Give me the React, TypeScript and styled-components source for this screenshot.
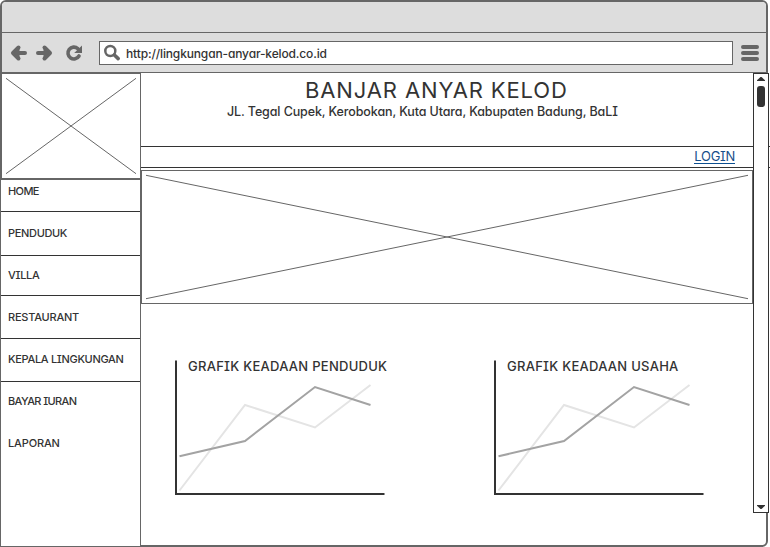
import React from "react";
import styled, { createGlobalStyle } from "styled-components";

const FRAME = "#666666";
const INK = "#333333";

const GlobalStyle = createGlobalStyle`
  * { box-sizing: border-box; }
  body { margin: 0; background: #fff; overflow: hidden; }
  #root { font-family: Inter, "Noto Sans", sans-serif; font-feature-settings: "cv11", "cv08"; color: ${INK}; }
`;

const Page = styled.div`
  position: relative;
  width: 770px;
  height: 547px;
  overflow: hidden;
`;

const Window = styled.div`
  width: 768px;
  height: 547px;
  border: 2px solid ${FRAME};
  border-radius: 6px;
  background: #fff;
  display: flex;
  flex-direction: column;
`;

const TitleBar = styled.div`
  height: 31px;
  flex: none;
  background: #dddddd;
  border-bottom: 1px solid ${FRAME};
  border-radius: 4px 4px 0 0;
`;

const Toolbar = styled.div`
  height: 40px;
  flex: none;
  display: flex;
  align-items: center;
  padding: 0 7px 0 8px;
  background: #dddddd;
  border-bottom: 1px solid ${FRAME};
`;

const ToolIcon = styled.svg<{ $gap: number }>`
  display: block;
  flex: none;
  margin-right: ${(p) => p.$gap}px;
  overflow: visible;
`;

const AddressBar = styled.div`
  flex: 1;
  height: 24px;
  display: flex;
  align-items: center;
  padding-left: 4px;
  border: 1px solid ${FRAME};
  background: #fff;
  margin-right: 8px;
`;

const Url = styled.span`
  font-size: 12px;
  font-weight: 500;
  line-height: 16px;
  letter-spacing: -0.14px;
  padding-top: 2px;
  white-space: nowrap;
`;

const Body = styled.div`
  flex: 1;
  min-height: 0;
  display: grid;
  grid-template-columns: 141px 612px;
  margin-left: -2px;
  margin-bottom: -2px;
`;

const Sidebar = styled.aside`
  display: flex;
  flex-direction: column;
`;

const LogoBox = styled.div`
  height: 106px;
  flex: none;
  margin-left: 1px;
  border: 1px solid ${FRAME};
  background: #fff;
`;

const Menu = styled.nav`
  flex: 1;
  border: 1px solid ${FRAME};
  background: #fff;
`;

const MenuItem = styled.a<{ $height: number; $top: number; $line: boolean; $spacing: number }>`
  display: block;
  height: ${(p) => p.$height}px;
  padding: ${(p) => p.$top}px 0 0 7px;
  border-bottom: ${(p) => (p.$line ? `1px solid ${INK}` : "none")};
  font-size: 11px;
  font-weight: 500;
  line-height: 16px;
  letter-spacing: ${(p) => p.$spacing}px;
  white-space: nowrap;
`;

const Main = styled.main`
  display: flex;
  flex-direction: column;
`;

const Header = styled.header`
  height: 74px;
  width: 629px;
  flex: none;
  border-bottom: 1px solid ${INK};
`;

const Title = styled.h1`
  margin: 0;
  padding: 3px 0 0 164px;
  font-size: 22px;
  font-weight: 400;
  line-height: 28px;
  letter-spacing: 0.88px;
  white-space: nowrap;
`;

const Address = styled.p`
  margin: 0;
  padding: 0 0 0 86px;
  font-size: 12.5px;
  font-weight: 500;
  line-height: 16px;
  letter-spacing: -0.11px;
  white-space: nowrap;
`;

const LoginBar = styled.div`
  height: 21px;
  width: 629px;
  flex: none;
  padding: 2px 35px 0 0;
  border-bottom: 1px solid ${INK};
  text-align: right;
`;

const LoginLink = styled.a`
  display: inline-block;
  height: 15px;
  border-bottom: 1px solid #0b4f91;
  color: #174f8a;
  font-size: 13px;
  line-height: 15px;
  letter-spacing: -0.3px;
  vertical-align: top;
`;

const Banner = styled.div`
  height: 134px;
  flex: none;
  margin-top: 2px;
  border: 1px solid ${FRAME};
`;

const Cross = styled.svg`
  display: block;
`;

const Charts = styled.section`
  display: grid;
  grid-template-columns: 210px 210px;
  column-gap: 109px;
  padding: 56px 0 0 34px;
`;

const ChartCard = styled.figure`
  margin: 0;
  display: grid;
  & > * { grid-area: 1 / 1; }
`;

const ChartTitle = styled.figcaption`
  padding-left: 13px;
  font-size: 13px;
  font-weight: 500;
  line-height: 12px;
  letter-spacing: 0.27px;
  white-space: nowrap;
`;

const Scrollbar = styled.div`
  position: absolute;
  left: 753px;
  top: 73px;
  width: 16px;
  height: 440px;
  display: flex;
  flex-direction: column;
  align-items: center;
  padding: 3px 0;
  border: 1px solid ${INK};
  background: #fff;
`;

const Thumb = styled.div`
  width: 8px;
  height: 21px;
  margin-top: 5px;
  margin-bottom: auto;
  border-radius: 3px;
  background: ${INK};
`;

function CrossLines({ width, height }: { width: number; height: number }) {
  return (
    <Cross width={width} height={height} fill="none" stroke={FRAME} strokeWidth={1}>
      <path d={`M4 4.3L${width - 4} ${height - 4.3}M4 ${height - 4.3}L${width - 4} 4.3`} />
    </Cross>
  );
}

function Chart({ title }: { title: string }) {
  return (
    <ChartCard>
      <svg width="210" height="136" fill="none" strokeWidth="2">
        <polyline points="4.5,130.5 70,45 140,67.5 195.5,25" stroke="#e4e4e4" />
        <polyline points="4.5,96.3 70,81 140,27 195.5,45" stroke="#a3a3a3" />
        <path d="M1 0.5V134H209.5" stroke={INK} />
      </svg>
      <ChartTitle>{title}</ChartTitle>
    </ChartCard>
  );
}

const menu = [
  { label: "HOME", height: 32, top: 3, line: true, spacing: -0.6 },
  { label: "PENDUDUK", height: 44, top: 13, line: true, spacing: -0.33 },
  { label: "VILLA", height: 40, top: 11, line: true, spacing: -0.3 },
  { label: "RESTAURANT", height: 43, top: 13, line: true, spacing: -0.22 },
  { label: "KEPALA LINGKUNGAN", height: 43, top: 12, line: true, spacing: -0.32 },
  { label: "BAYAR IURAN", height: 42, top: 11, line: false, spacing: -0.62 },
  { label: "LAPORAN", height: 42, top: 11, line: false, spacing: -0.15 },
];

export default function App() {
  return (
    <Page>
      <GlobalStyle />
      <Window>
        <TitleBar />
        <Toolbar>
          <ToolIcon $gap={9} width="17" height="16" fill="none" stroke={FRAME} strokeWidth="4" strokeLinecap="round" strokeLinejoin="round">
            <path d="M8.5 2.5L3 8L8.5 13.5M4 8H15" />
            <path d="M3 8L9 3.5V12.5Z" fill={FRAME} strokeWidth="1" />
          </ToolIcon>
          <ToolIcon $gap={14} width="16" height="16" fill="none" stroke={FRAME} strokeWidth="4" strokeLinecap="round" strokeLinejoin="round">
            <path d="M8.5 2.5L14 8L8.5 13.5M13 8H2" />
            <path d="M14 8L8 3.5V12.5Z" fill={FRAME} strokeWidth="1" />
          </ToolIcon>
          <ToolIcon $gap={17} width="16" height="16" fill="none">
            <path d="M11.8 3.6A5.9 5.9 0 1 0 13 11" stroke={FRAME} strokeWidth="3.6" strokeLinecap="round" />
            <path d="M16 .6V8H8.2Z" fill={FRAME} />
          </ToolIcon>
          <AddressBar>
            <ToolIcon $gap={5} width="17" height="16" fill="none" stroke={FRAME}>
              <circle cx="6.3" cy="6" r="5" strokeWidth="2.5" />
              <path d="M10.4 10L14.2 13.6" strokeWidth="3.6" strokeLinecap="round" />
            </ToolIcon>
            <Url>http://lingkungan-anyar-kelod.co.id</Url>
          </AddressBar>
          <ToolIcon $gap={0} width="18" height="17" stroke={FRAME} strokeWidth="4" strokeLinecap="round">
            <path d="M2 3H16M2 9H16M2 15H16" />
          </ToolIcon>
        </Toolbar>
        <Body>
          <Sidebar>
            <LogoBox>
              <CrossLines width={138} height={104} />
            </LogoBox>
            <Menu>
              {menu.map((m) => (
                <MenuItem key={m.label} $height={m.height} $top={m.top} $line={m.line} $spacing={m.spacing}>
                  {m.label}
                </MenuItem>
              ))}
            </Menu>
          </Sidebar>
          <Main>
            <Header>
              <Title>BANJAR ANYAR KELOD</Title>
              <Address>JL. Tegal Cupek, Kerobokan, Kuta Utara, Kabupaten Badung, BaLI</Address>
            </Header>
            <LoginBar>
              <LoginLink>LOGIN</LoginLink>
            </LoginBar>
            <Banner>
              <CrossLines width={610} height={132} />
            </Banner>
            <Charts>
              <Chart title="GRAFIK KEADAAN PENDUDUK" />
              <Chart title="GRAFIK KEADAAN USAHA" />
            </Charts>
          </Main>
        </Body>
      </Window>
      <Scrollbar>
        <svg width="8" height="4">
          <path d="M0 4V3.3L3.5 0H4.5L8 3.3V4Z" fill={INK} />
        </svg>
        <Thumb />
        <svg width="8" height="4">
          <path d="M0 0H8V.7L4.5 4H3.5L0 .7Z" fill={INK} />
        </svg>
      </Scrollbar>
    </Page>
  );
}
